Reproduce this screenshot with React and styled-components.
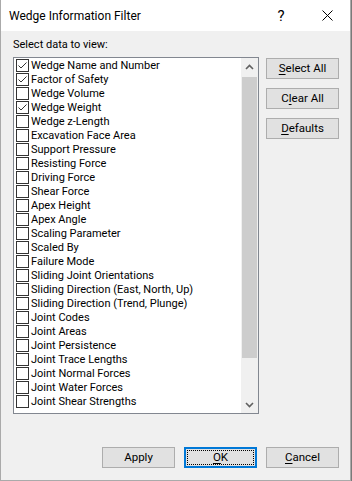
import React from "react";
import styled, { createGlobalStyle } from "styled-components";

const GlobalStyle = createGlobalStyle`
  html, body {
    margin: 0;
    padding: 0;
    background: #7a7a7a;
  }
  * {
    box-sizing: border-box;
  }
`;

const Window = styled.div`
  width: 351px;
  height: 481px;
  display: flex;
  flex-direction: column;
  background: #f0f0f0;
  border: 1px solid #aaaaaa;
  border-top: none;
  font-family: Roboto, "Liberation Sans", Arial, sans-serif;
  font-size: 11px;
  color: #000;
`;

const TitleBar = styled.div`
  height: 31px;
  background: #fff;
  display: flex;
  align-items: center;
  padding-left: 8px;
`;

const Title = styled.div`
  flex: 1;
  font-size: 12px;
  padding-top: 1px;
`;

const TitleButton = styled.div`
  width: ${(p) => p.w}px;
  height: 31px;
  display: flex;
  align-items: center;
  justify-content: center;
  font-size: 15px;
`;

const Body = styled.div`
  flex: 1;
  display: flex;
  flex-direction: column;
  padding: 6px 11px 12px 12px;
`;

const Label = styled.div`
  line-height: 16px;
  margin-bottom: 4px;
`;

const Main = styled.div`
  display: flex;
  align-items: flex-start;
  gap: 7px;
`;

const ListBox = styled.div`
  width: 246px;
  height: 357px;
  border: 1px solid #828790;
  background: #fff;
  display: flex;
`;

const Items = styled.div`
  flex: 1;
  padding: 1px 0 0 2px;
  overflow: hidden;
`;

const Row = styled.div`
  height: 14px;
  display: flex;
  align-items: flex-start;
  white-space: nowrap;
`;

const Box = styled.span`
  width: 13px;
  height: 13px;
  border: 1px solid #333333;
  background: #fff;
  flex: none;
  display: flex;
  align-items: center;
  justify-content: center;
`;

const RowText = styled.span`
  margin-left: 2px;
  line-height: 14px;
`;

const ScrollBar = styled.div`
  width: 17px;
  background: #f0f0f0;
  display: flex;
  flex-direction: column;
`;

const Arrow = styled.div`
  height: 17px;
  display: flex;
  align-items: center;
  justify-content: center;
`;

const Track = styled.div`
  flex: 1;
  padding: 2px 1px 0 1px;
`;

const Thumb = styled.div`
  height: 281px;
  background: #cdcdcd;
`;

const SideButtons = styled.div`
  display: flex;
  flex-direction: column;
  gap: 9px;
  margin-top: 1px;
`;

const Button = styled.button`
  width: 73px;
  height: 21px;
  padding: 0;
  font-family: inherit;
  font-size: 11.5px;
  color: #000;
  background: #e1e1e1;
  border: 1px solid ${(p) => (p.$focused ? "#0078d7" : "#adadad")};
  box-shadow: ${(p) => (p.$focused ? "inset 0 0 0 1px #0078d7" : "none")};
  outline: ${(p) => (p.$focused ? "1px dotted #000" : "none")};
  outline-offset: -4px;
  line-height: 19px;
`;

const Footer = styled.div`
  margin-top: auto;
  display: flex;
  justify-content: flex-end;
  gap: 9px;
`;

const U = styled.span`
  text-decoration: underline;
  text-underline-offset: 2px;
`;

const items = [
  ["Wedge Name and Number", true],
  ["Factor of Safety", true],
  ["Wedge Volume", false],
  ["Wedge Weight", true],
  ["Wedge z-Length", false],
  ["Excavation Face Area", false],
  ["Support Pressure", false],
  ["Resisting Force", false],
  ["Driving Force", false],
  ["Shear Force", false],
  ["Apex Height", false],
  ["Apex Angle", false],
  ["Scaling Parameter", false],
  ["Scaled By", false],
  ["Failure Mode", false],
  ["Sliding Joint Orientations", false],
  ["Sliding Direction (East, North, Up)", false],
  ["Sliding Direction (Trend, Plunge)", false],
  ["Joint Codes", false],
  ["Joint Areas", false],
  ["Joint Persistence", false],
  ["Joint Trace Lengths", false],
  ["Joint Normal Forces", false],
  ["Joint Water Forces", false],
  ["Joint Shear Strengths", false],
];

function Check() {
  return (
    <svg width="11" height="11" viewBox="0 0 11 11">
      <polyline
        points="1.5,5.5 4,8 9.5,2.5"
        fill="none"
        stroke="#333"
        strokeWidth="1"
      />
    </svg>
  );
}

function Chevron({ up }) {
  return (
    <svg width="9" height="6" viewBox="0 0 9 6">
      <polyline
        points={up ? "1,5 4.5,1.5 8,5" : "1,1 4.5,4.5 8,1"}
        fill="none"
        stroke="#606060"
        strokeWidth="1.6"
      />
    </svg>
  );
}

export default function App() {
  return (
    <>
      <GlobalStyle />
      <Window>
        <TitleBar>
          <Title>Wedge Information Filter</Title>
          <TitleButton w={46}>?</TitleButton>
          <TitleButton w={46}>
            <svg width="11" height="11" viewBox="0 0 11 11">
              <path d="M0.5 0.5 L10.5 10.5 M10.5 0.5 L0.5 10.5" stroke="#000" strokeWidth="1" />
            </svg>
          </TitleButton>
        </TitleBar>
        <Body>
          <Label>Select data to view:</Label>
          <Main>
            <ListBox>
              <Items>
                {items.map(([name, on]) => (
                  <Row key={name}>
                    <Box>{on && <Check />}</Box>
                    <RowText>{name}</RowText>
                  </Row>
                ))}
              </Items>
              <ScrollBar>
                <Arrow>
                  <Chevron up />
                </Arrow>
                <Track>
                  <Thumb />
                </Track>
                <Arrow>
                  <Chevron />
                </Arrow>
              </ScrollBar>
            </ListBox>
            <SideButtons>
              <Button>
                <U>S</U>elect All
              </Button>
              <Button>
                C<U>l</U>ear All
              </Button>
              <Button>
                <U>D</U>efaults
              </Button>
            </SideButtons>
          </Main>
          <Footer>
            <Button>Apply</Button>
            <Button $focused>
              <U>O</U>K
            </Button>
            <Button>
              <U>C</U>ancel
            </Button>
          </Footer>
        </Body>
      </Window>
    </>
  );
}
